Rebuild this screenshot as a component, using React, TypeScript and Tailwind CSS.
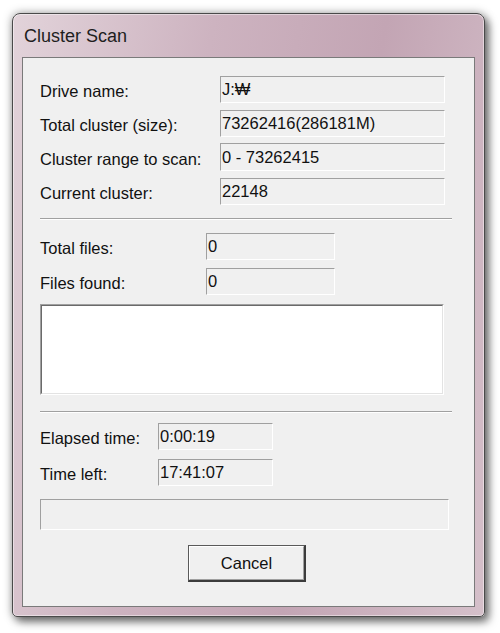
import React from "react";

const font = { fontFamily: '"Liberation Sans", Arial, sans-serif' };

function Field({ w, h, children }: { w: string; h: string; children?: React.ReactNode }) {
  return (
    <div
      className={`${w} ${h} border border-t-[#a0a0a0] border-l-[#a0a0a0] border-r-white border-b-white bg-[#f0f0f0] flex items-center pl-[1px] text-[16.5px] text-[#111] leading-none`}
    >
      {children}
    </div>
  );
}

function Row({
  label,
  value,
  mt,
  fieldX,
  fieldW,
  h,
}: {
  label: string;
  value: string;
  mt: string;
  fieldX: string;
  fieldW: string;
  h: string;
}) {
  return (
    <div className={`flex items-center ${mt}`}>
      <div className={`${fieldX} shrink-0 text-[16.5px] text-[#111] leading-none pt-[4px]`}>{label}</div>
      <Field w={fieldW} h={h}>
        {value}
      </Field>
    </div>
  );
}

function Separator({ mt }: { mt: string }) {
  return (
    <div className={`${mt} w-[412px]`}>
      <div className="h-px bg-[#a0a0a0]" />
      <div className="h-px bg-white" />
    </div>
  );
}

export default function App() {
  return (
    <div className="w-[500px] h-[633px] bg-white overflow-hidden pl-[12px] pt-[13px]" style={font}>
      <div className="w-[473px] h-[604px] rounded-t-[8px] rounded-b-[5px] border border-[#4a4a4a] bg-[linear-gradient(100deg,#e2d3da_0%,#cdb3c0_35%,#c3a5b4_65%,#d5c0ca_100%)] shadow-[0_0_10px_rgba(0,0,0,0.35),4px_5px_9px_rgba(0,0,0,0.5),inset_0_0_0_1px_rgba(255,255,255,0.45)] flex flex-col">
        <div className="h-[43px] pl-[11px] flex items-center shrink-0">
          <span className="text-[18px] text-[#1e1e1e] leading-none pt-[1px]">Cluster Scan</span>
        </div>
        <div className="mx-[9px] mb-[9px] flex-1 border border-[#7a7a7a] bg-[#f0f0f0] flex flex-col pl-[17px]">
          <Row label="Drive name:" value="J:₩" mt="mt-[18px]" fieldX="w-[180px]" fieldW="w-[225px]" h="h-[27px]" />
          <Row label="Total cluster (size):" value="73262416(286181M)" mt="mt-[7px]" fieldX="w-[180px]" fieldW="w-[225px]" h="h-[27px]" />
          <Row label="Cluster range to scan:" value="0 - 73262415" mt="mt-[6px]" fieldX="w-[180px]" fieldW="w-[225px]" h="h-[28px]" />
          <Row label="Current cluster:" value="22148" mt="mt-[7px]" fieldX="w-[180px]" fieldW="w-[225px]" h="h-[27px]" />

          <Separator mt="mt-[13px]" />

          <Row label="Total files:" value="0" mt="mt-[13px]" fieldX="w-[166px]" fieldW="w-[129px]" h="h-[27px]" />
          <Row label="Files found:" value="0" mt="mt-[8px]" fieldX="w-[166px]" fieldW="w-[129px]" h="h-[27px]" />

          <div className="mt-[9px] w-[404px] h-[91px] border border-t-[#a0a0a0] border-l-[#a0a0a0] border-r-white border-b-white">
            <div className="w-full h-full border border-t-[#6a6a6a] border-l-[#6a6a6a] border-r-[#e3e3e3] border-b-[#e3e3e3] bg-white" />
          </div>

          <Separator mt="mt-[16px]" />

          <Row label="Elapsed time:" value="0:00:19" mt="mt-[10px]" fieldX="w-[118px]" fieldW="w-[115px]" h="h-[27px]" />
          <Row label="Time left:" value="17:41:07" mt="mt-[9px]" fieldX="w-[118px]" fieldW="w-[115px]" h="h-[27px]" />

          <div className="mt-[13px] w-[409px] h-[31px] border border-t-[#a0a0a0] border-l-[#a0a0a0] border-r-white border-b-white bg-[#f0f0f0]" />

          <div className="mt-[15px] ml-[148px] w-[118px] h-[37px] border border-[#5a5a5a] border-r-[#3c3c3c] border-b-[#3c3c3c] border-r-2 border-b-2">
            <div className="w-full h-full border border-t-white border-l-white border-r-[#a0a0a0] border-b-[#a0a0a0] bg-[#f0f0f0] flex items-center justify-center text-[16.5px] text-[#111] leading-none">
              Cancel
            </div>
          </div>
        </div>
      </div>
    </div>
  );
}
